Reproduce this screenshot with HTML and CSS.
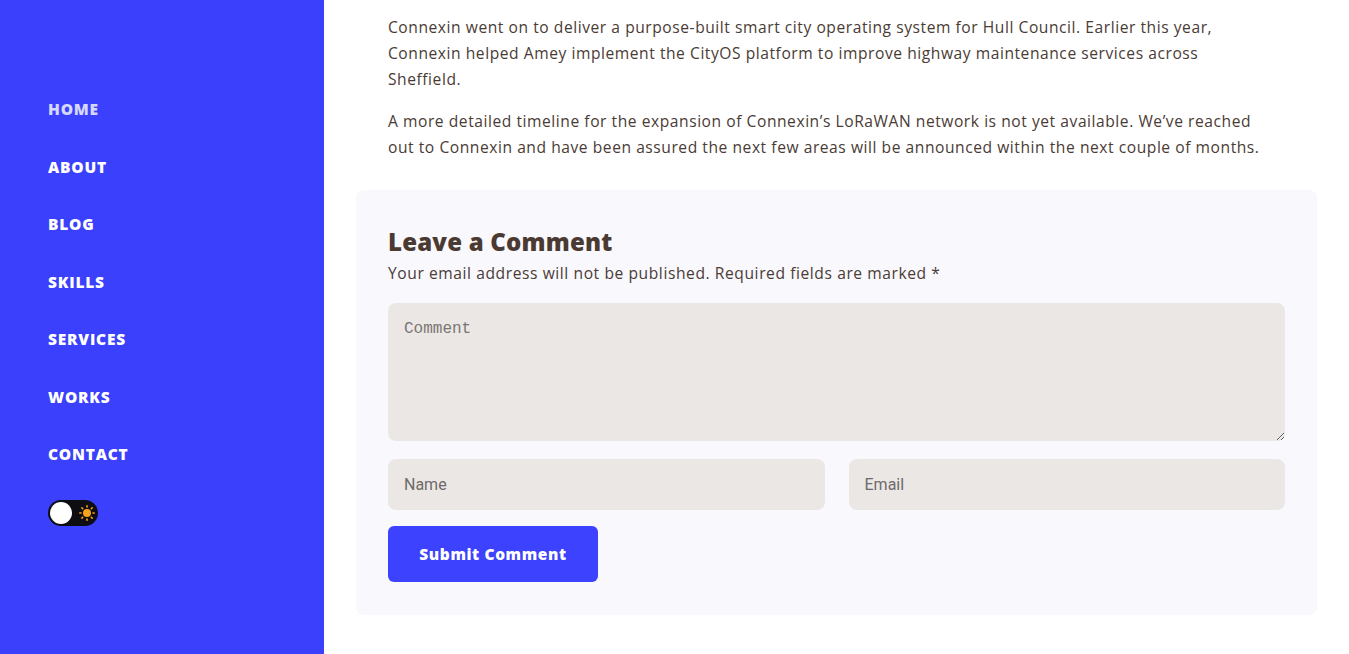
FILE: index.html
```html
<!DOCTYPE html>
<html lang="en">
<head>
<meta charset="utf-8">
<title>Post</title>
<link rel="stylesheet" href="styles.css">
</head>
<body>
<div class="page">
  <aside class="sidebar">
    <nav class="nav">
      <a class="nav-link active" href="#">HOME</a>
      <a class="nav-link" href="#">ABOUT</a>
      <a class="nav-link" href="#">BLOG</a>
      <a class="nav-link" href="#">SKILLS</a>
      <a class="nav-link" href="#">SERVICES</a>
      <a class="nav-link" href="#">WORKS</a>
      <a class="nav-link" href="#">CONTACT</a>
    </nav>
    <div class="toggle">
      <span class="knob"></span>
      <svg class="sun" width="16" height="16" viewBox="0 0 16 16">
        <circle cx="8" cy="8" r="4" fill="#f7a21b"/>
        <g stroke="#f7a21b" stroke-width="1.6" stroke-linecap="round">
          <line x1="8" y1="0.8" x2="8" y2="2"/>
          <line x1="8" y1="14" x2="8" y2="15.2"/>
          <line x1="0.8" y1="8" x2="2" y2="8"/>
          <line x1="14" y1="8" x2="15.2" y2="8"/>
          <line x1="2.9" y1="2.9" x2="3.7" y2="3.7"/>
          <line x1="12.3" y1="12.3" x2="13.1" y2="13.1"/>
          <line x1="2.9" y1="13.1" x2="3.7" y2="12.3"/>
          <line x1="12.3" y1="3.7" x2="13.1" y2="2.9"/>
        </g>
      </svg>
    </div>
  </aside>
  <main class="content">
    <div class="article">
      <p>Connexin went on to deliver a purpose-built smart city operating system for Hull Council. Earlier this year, Connexin helped Amey implement the CityOS platform to improve highway maintenance services across Sheffield.</p>
      <p>A more detailed timeline for the expansion of Connexin’s LoRaWAN network is not yet available. We’ve reached out to Connexin and have been assured the next few areas will be announced within the next couple of months.</p>
    </div>
    <section class="comment-box">
      <h2 class="comment-title">Leave a Comment</h2>
      <p class="comment-note">Your email address will not be published. Required fields are marked *</p>
      <form class="comment-form">
        <textarea class="field textarea" placeholder="Comment"></textarea>
        <div class="row">
          <input class="field input" type="text" placeholder="Name">
          <input class="field input" type="email" placeholder="Email">
        </div>
        <button class="submit" type="button">Submit Comment</button>
      </form>
    </section>
  </main>
</div>
</body>
</html>
```

FILE: styles.css
```css
* { box-sizing: border-box; }
html, body { margin: 0; padding: 0; }
body {
  font-family: "Open Sans", "Liberation Sans", sans-serif;
  background: #ffffff;
  color: #4a3b35;
  overflow: hidden;
}
.page {
  display: flex;
  height: 654px;
}
.sidebar {
  width: 324px;
  flex: 0 0 324px;
  background: #3b40fd;
  padding: 98px 0 0 48px;
}
.nav {
  display: flex;
  flex-direction: column;
  gap: 35.5px;
}
.nav-link {
  font-family: "Open Sans", sans-serif;
  font-weight: 800;
  font-size: 15.5px;
  line-height: 22px;
  color: #ffffff;
  text-decoration: none;
  letter-spacing: 0.8px;
}
.nav-link.active { color: #d6d8fb; }
.toggle {
  margin-top: 35px;
  width: 50px;
  height: 26px;
  border-radius: 13px;
  background: #0d0d12;
  display: flex;
  align-items: center;
  padding: 0 3px 0 2px;
  justify-content: space-between;
}
.knob {
  width: 22px;
  height: 22px;
  border-radius: 50%;
  background: #ffffff;
}
.sun { display: block; }
.content {
  flex: 1;
  padding: 0 32px;
}
.article {
  padding: 14px 51px 0 32px;
}
.article p {
  margin: 0 0 16px;
  font-size: 15.6px;
  line-height: 26px;
  letter-spacing: 0.55px;
}
.comment-box {
  margin-top: 30px;
  width: 961px;
  background: #f8f8fd;
  border-radius: 8px;
  padding: 37px 32px 33px;
}
.comment-title {
  margin: 0;
  font-size: 24px;
  line-height: 30px;
  font-weight: 800;
  color: #4b3a32;
  letter-spacing: 0.2px;
}
.comment-note {
  margin: 4px 0 18px;
  font-size: 15.6px;
  line-height: 24px;
  letter-spacing: 0.58px;
}
.comment-form {
  display: flex;
  flex-direction: column;
  gap: 18px;
}
.field {
  border: none;
  background: #ebe7e5;
  border-radius: 8px;
  outline: none;
  color: #4a3b35;
}
.textarea {
  height: 138px;
  padding: 17px 16px 16px;
  font-family: "Liberation Mono", monospace;
  font-size: 16px;
  line-height: 18px;
  resize: vertical;
}
.textarea::placeholder { color: #7a7574; }
.row {
  display: flex;
  gap: 24px;
}
.input {
  flex: 1;
  height: 51px;
  padding: 0 16px;
  font-family: "Roboto", "Liberation Sans", sans-serif;
  font-size: 16px;
}
.input::placeholder { color: #6e6a69; }
.submit {
  align-self: flex-start;
  width: 210px;
  height: 56px;
  border: none;
  border-radius: 6px;
  background: #3c42fd;
  color: #ffffff;
  font-family: "Open Sans", sans-serif;
  font-weight: 800;
  font-size: 15.5px;
  letter-spacing: 0.6px;
  cursor: pointer;
  margin-top: -2px;
}
```
